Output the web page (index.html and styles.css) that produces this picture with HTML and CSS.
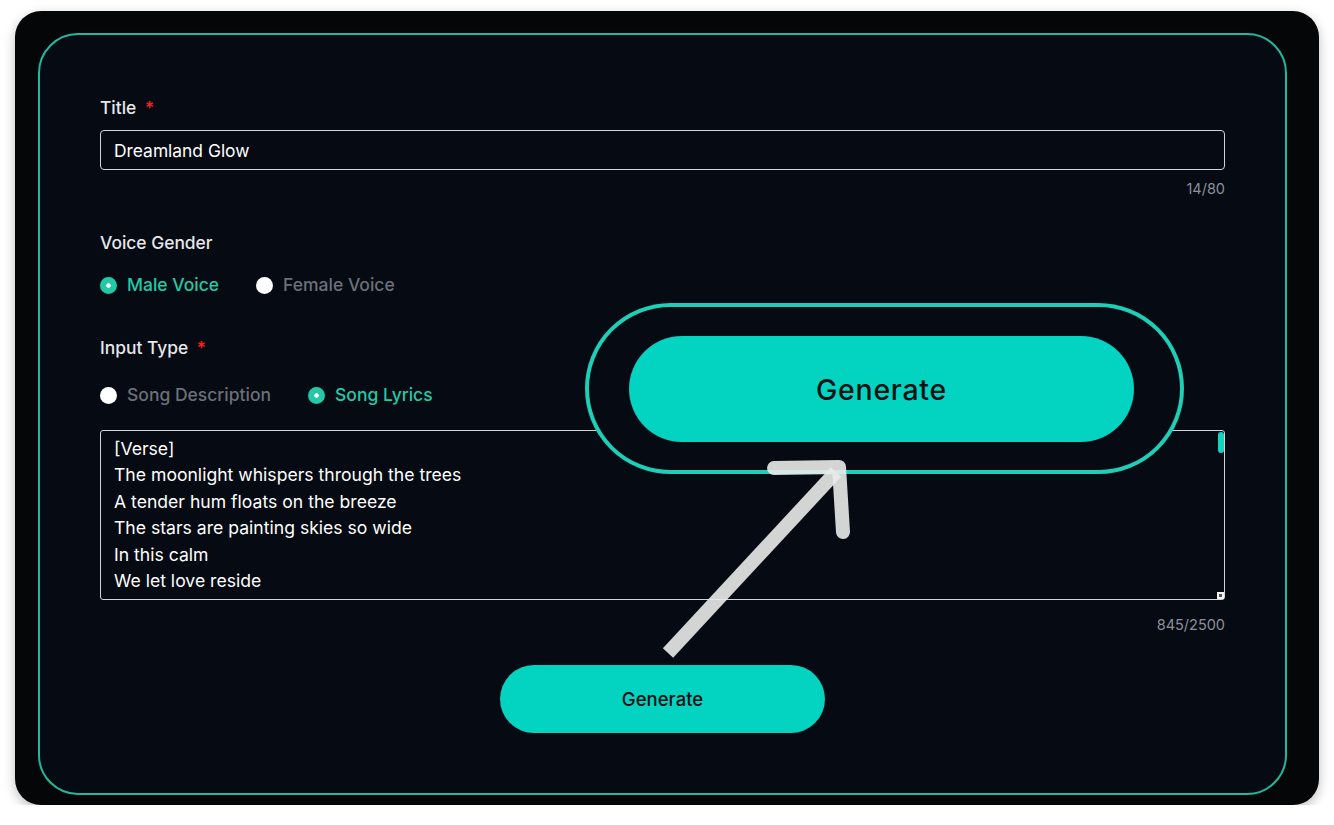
FILE: index.html
```html
<!DOCTYPE html>
<html lang="en">
<head>
    <meta charset="UTF-8">
    <meta name="viewport" content="width=device-width, initial-scale=1.0">
    <title>Generate Song</title>
    <link rel="stylesheet" href="styles.css">
</head>
<body>
    <div class="frame">
        <div class="panel">
            <form class="song-form" onsubmit="return false">
                <label class="field-label" for="title">Title <span class="required">*</span></label>
                <input class="text-input" id="title" type="text" value="Dreamland Glow" maxlength="80">
                <div class="counter">14/80</div>

                <div class="field-label gender-label">Voice Gender</div>
                <div class="radio-row">
                    <label class="radio checked"><span class="dot"></span>Male Voice</label>
                    <label class="radio"><span class="dot"></span>Female Voice</label>
                </div>

                <div class="field-label type-label">Input Type <span class="required">*</span></div>
                <div class="radio-row type-row">
                    <label class="radio"><span class="dot"></span>Song Description</label>
                    <label class="radio checked"><span class="dot"></span>Song Lyrics</label>
                </div>

                <div class="lyrics-wrap">
                    <textarea class="lyrics" maxlength="2500">[Verse]
The moonlight whispers through the trees
A tender hum floats on the breeze
The stars are painting skies so wide
In this calm
We let love reside

[Verse 2]
The river hums a quiet tune
Beneath the silver-hearted moon
Your hand in mine, the world stands still
Every dream
Is ours to fill

[Chorus]
Dreamland glow, hold me slow
Where the soft winds come and go
Close your eyes and drift with me
Into the light
Where hearts are free

[Bridge]
Fireflies dance upon the stream
Weaving softly through our dream
Every heartbeat, every sigh
Echoes gently
Through the sky

[Chorus]
Dreamland glow, hold me slow
Where the soft winds come and go
Close your eyes and drift with me
Into the light
Where hearts are free</textarea>
                    <span class="scroll-thumb"></span>
                    <span class="resize-grip"></span>
                </div>
                <div class="counter lyrics-counter">845/2500</div>

                <div class="actions">
                    <button class="generate-btn" type="submit">Generate</button>
                </div>
            </form>
        </div>

        <div class="callout">
            <div class="callout-btn">Generate</div>
        </div>
        <svg class="pointer" width="220" height="220" viewBox="0 0 220 220">
            <line x1="28" y1="203" x2="196" y2="22" stroke="rgba(234,234,234,0.9)" stroke-width="14"/>
            <polyline points="134,18 199,17 203,82" fill="none" stroke="rgba(234,234,234,0.9)" stroke-width="14" stroke-linecap="round" stroke-linejoin="round"/>
        </svg>
    </div>
</body>
</html>
```

FILE: styles.css
```css
body {
    margin: 0;
    background-color: #ffffff;
    font-family: Inter, 'Noto Sans', sans-serif;
}
.frame {
    position: relative;
    box-sizing: border-box;
    width: 1304px;
    height: 794px;
    margin: 11px 0 0 15px;
    padding: 22px 32px 10px 23px;
    background-color: #050607;
    border-radius: 26px;
    box-shadow: 0 4px 12px rgba(0,0,0,0.25);
}
.panel {
    box-sizing: border-box;
    height: 100%;
    border: 2px solid #22b89e;
    border-radius: 40px;
    background-color: #060a12;
    padding: 61px 60px 0 60px;
}
.song-form {
    display: flex;
    flex-direction: column;
}
.field-label {
    color: #e5e7eb;
    font-size: 17.4px;
    font-weight: 500;
    line-height: 24px;
}
.required {
    color: #ff1f1f;
    margin-left: 4px;
}
.text-input {
    box-sizing: border-box;
    margin-top: 10px;
    height: 40px;
    padding: 0 13px;
    background-color: transparent;
    border: 1px solid #d4d4d8;
    border-radius: 4px;
    color: #ffffff;
    font-family: inherit;
    font-size: 17.4px;
    outline: none;
}
.counter {
    align-self: flex-end;
    margin-top: 9px;
    color: #8b9099;
    font-size: 14.5px;
    line-height: 20px;
}
.gender-label {
    margin-top: 32px;
}
.radio-row {
    display: flex;
    gap: 37px;
    margin-top: 18px;
}
.type-label {
    margin-top: 39px;
}
.type-row {
    margin-top: 23px;
}
.radio {
    display: flex;
    align-items: center;
    gap: 10px;
    color: #6b7078;
    font-size: 17.5px;
    font-weight: 500;
    line-height: 24px;
}
.radio .dot {
    box-sizing: border-box;
    width: 17px;
    height: 17px;
    border-radius: 50%;
    background-color: #ffffff;
}
.radio.checked {
    color: #22c9a7;
}
.radio.checked .dot {
    background-color: #22c9a7;
    border: 6px solid #22c9a7;
    background-clip: padding-box;
    box-shadow: inset 0 0 0 3px #ffffff;
}
.lyrics-wrap {
    position: relative;
    display: flex;
    margin-top: 23px;
}
.lyrics {
    box-sizing: border-box;
    flex: 1;
    height: 170px;
    padding: 5px 13px 3px;
    background-color: transparent;
    border: 1px solid #d4d4d8;
    border-radius: 3px;
    color: #ffffff;
    font-family: inherit;
    font-size: 17.6px;
    line-height: 26.4px;
    resize: none;
    outline: none;
    scrollbar-width: none;
}
.scroll-thumb {
    position: absolute;
    top: 2px;
    right: 1px;
    width: 6px;
    height: 21px;
    border-radius: 3px;
    background-color: #14d3bd;
}
.resize-grip {
    position: absolute;
    right: 1px;
    bottom: 1px;
    width: 7px;
    height: 7px;
    background-color: #f2f2f2;
}
.resize-grip::after {
    content: "";
    position: absolute;
    right: 2px;
    bottom: 2px;
    width: 3px;
    height: 3px;
    background-color: #555;
}
.lyrics-counter {
    margin-top: 15px;
}
.actions {
    display: flex;
    justify-content: center;
    margin-top: 30px;
}
.generate-btn {
    width: 325px;
    height: 68px;
    border: none;
    border-radius: 34px;
    background-color: #03d3c1;
    color: #0a0f12;
    font-family: inherit;
    font-size: 18.5px;
    font-weight: 500;
    cursor: pointer;
}
.callout {
    position: absolute;
    left: 570px;
    top: 292px;
    box-sizing: border-box;
    width: 599px;
    height: 171px;
    border: 4px solid #1ccfb6;
    border-radius: 86px;
    background-color: #060a12;
    padding: 29px 0 0 40px;
}
.callout-btn {
    width: 505px;
    height: 106px;
    border-radius: 53px;
    background-color: #03d3c1;
    color: #0a1214;
    font-size: 28.5px;
    font-weight: 500;
    letter-spacing: 0.7px;
    display: flex;
    align-items: center;
    justify-content: center;
}
.pointer {
    position: absolute;
    left: 625px;
    top: 439px;
}
```
